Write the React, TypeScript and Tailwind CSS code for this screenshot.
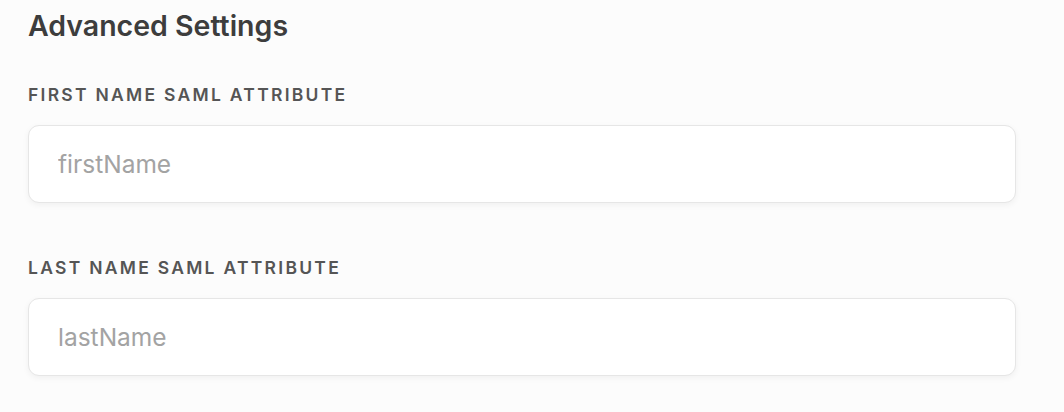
import React from "react";

function Field({ label, placeholder }: { label: string; placeholder: string }) {
  return (
    <div className="flex flex-col">
      <label className="text-[17.5px] leading-[22px] font-semibold tracking-[0.13em] text-[#555555] uppercase">
        {label}
      </label>
      <div className="mt-[19px] h-[78px] rounded-[11px] border border-[#e6e6e6] bg-white shadow-[0_2px_6px_rgba(0,0,0,0.05)] flex items-center px-[29px]">
        <input
          className="w-full bg-transparent outline-none text-[24.5px] text-[#333] placeholder:text-[#a3a3a3]"
          placeholder={placeholder}
        />
      </div>
    </div>
  );
}

export default function App() {
  return (
    <div
      className="min-h-[412px] w-[1064px] bg-[#fcfcfc] pl-[28px] pr-[48px] pt-[10px]"
      style={{ fontFamily: "Inter, 'Noto Sans', sans-serif" }}
    >
      <h2 className="text-[28.5px] leading-[32px] font-semibold text-[#3d3d3d]">Advanced Settings</h2>
      <div className="mt-[42px] flex flex-col gap-[54px]">
        <Field label="First Name SAML Attribute" placeholder="firstName" />
        <Field label="Last Name SAML Attribute" placeholder="lastName" />
      </div>
    </div>
  );
}
